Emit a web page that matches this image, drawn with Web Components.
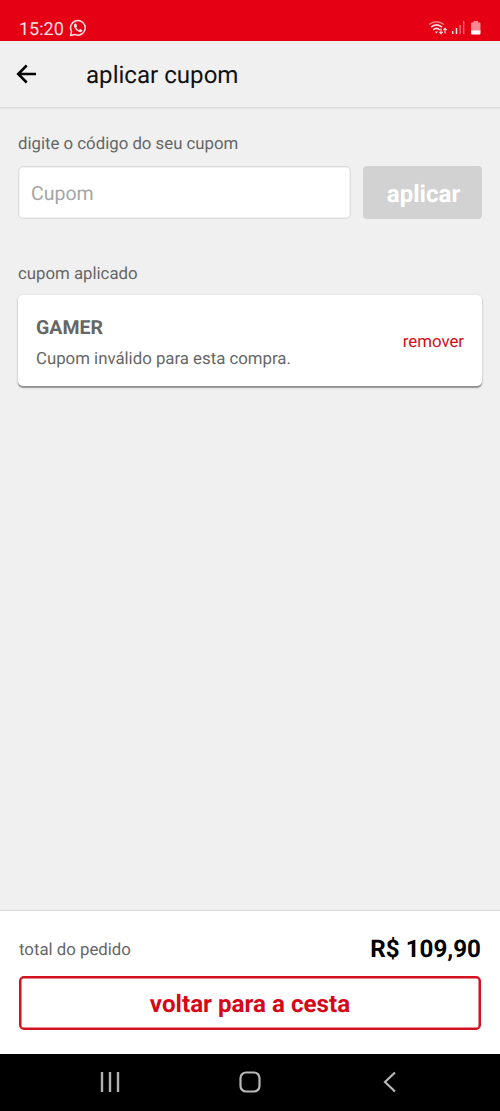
<!DOCTYPE html>
<html lang="pt-BR">
<head>
<meta charset="utf-8">
<title>aplicar cupom</title>
<style>
html,body{margin:0;height:100%}
body{font-family:Roboto,"Liberation Sans",sans-serif;background:#f0f0f0;color:#666;overflow:hidden;text-rendering:geometricPrecision}
</style>
</head>
<body>
<coupon-app></coupon-app>
<script>
const define = (name, html) => customElements.define(name, class extends HTMLElement {
  constructor() {
    super();
    const t = document.createElement('template');
    t.innerHTML = html;
    this.attachShadow({mode: 'open'}).appendChild(t.content.cloneNode(true));
  }
});

define('status-bar', `
<style>
:host{display:flex;align-items:flex-start;justify-content:space-between;box-sizing:border-box;height:41px;padding:18px 18px 0 19px;background:#e60014;color:#ffe3e3}
.left{display:flex;gap:6px;align-items:center;height:22px}
.time{font-size:18px;line-height:22px;padding-top:1px}
svg{display:block}
.wa{margin:0 0 2px -1px}
.sys{margin-top:1px}
</style>
<div class="left"><span class="time">15:20</span>
<svg class="wa" width="18" height="18" viewBox="0 0 18 18" fill="none" stroke="currentColor" stroke-width="1.5"><path d="M1.5 16.4l1-4A7.3 7.3 0 1 1 5.7 15.4z" stroke-linejoin="round"/><path d="M6.1 4.600c-1.500.9-1.500 2.500-.5 4.200 1.200 2.100 2.700 3.500 4.800 4.200 1.700.5 2.900-.3 3.100-1.700l-2.200-1.300-1.200 1.100c-1.400-.6-2.300-1.500-2.900-2.700l.9-1.200-.9-2.600z" fill="currentColor" stroke="none"/></svg></div>
<svg class="sys" width="54" height="20" viewBox="0 0 54 20" fill="none" stroke="currentColor">
<path d="M1 5.500Q8.500-.200 16 5.500" stroke-width="1.500" opacity=".55"/>
<path d="M3 8.200Q8.500 3.500 14 8.200M5.200 10.800Q8.500 8 11.800 10.800" stroke-width="1.700"/>
<path d="M7 12.500h3l-1.500 2z" fill="currentColor" stroke="none"/>
<path d="M13 9.500v5M11.200 12.900l1.800 1.800 1.800-1.800M17 14.500v-5M15.300 11.100L17 9.400l1.700 1.700" stroke-width="1.100"/>
<path d="M24.700 12v3M28.500 9v6" stroke-width="1.500"/><path d="M32.200 6v9M35.700 2v13" stroke-width="1.300" opacity=".5"/>
<path d="M43 4.500q0-1 1-1h1.500V2h4.500v1.500h1.500q1 0 1 1V12H43z" fill="currentColor" stroke="none" opacity=".6"/>
<path d="M43 11.500h9.500v3q0 1-1 1H44q-1 0-1-1z" fill="#fff" stroke="none"/>
</svg>`);

define('app-bar', `
<style>
:host{display:flex;align-items:center;box-sizing:border-box;height:67px;padding:0 16px;border-bottom:1px solid #dcdcdc;background:#f0f0f0;box-shadow:0 1px 1px #e8e8e8;color:#000}
svg{display:block;width:22px;height:22px;margin-right:48px}
h1{margin:2px 0 0;font-weight:400;font-size:24.100px;line-height:30px;color:#111}
</style>
<svg viewBox="0 0 22 22" fill="none" stroke="#000" stroke-width="2.500"><path d="M20 11H2.700M10.700 2.500L2.200 11l8.500 8.500"/></svg>
<h1><slot></slot></h1>`);

define('field-label', `
<style>:host{display:block;font-size:16.800px;line-height:20px;padding-top:1px;color:#666}</style><slot></slot>`);

define('coupon-form', `
<style>
:host{display:flex;gap:12px;height:53px}
input{flex:1;min-width:0;box-sizing:border-box;border:1px solid #dcdcdc;box-shadow:inset 0 0 0 .5px #e4e4e4;border-radius:5px;background:#fff;padding:2px 12px 0;font:400 19.500px Roboto,sans-serif;text-rendering:inherit;color:#666;outline:0}
input::placeholder{color:#a5a5a5;opacity:1}
button{width:119px;border:0;border-radius:4px;background:#d2d2d2;color:#fff;font:700 24.100px Roboto,sans-serif;text-rendering:inherit;padding:2px 0 0 2px}
</style>
<input placeholder="Cupom" aria-label="Cupom"><button disabled>aplicar</button>`);

define('coupon-card', `
<style>
:host{display:flex;align-items:center;justify-content:space-between;box-sizing:border-box;height:91px;padding:3px 18px 0;background:#fff;border-radius:5px;box-shadow:0 1.500px 1px rgba(0,0,0,.32),0 1px 3px rgba(0,0,0,.18)}
.code{font-weight:700;font-size:19.500px;line-height:24px;color:#666}
.msg{font-size:16.800px;line-height:22px;margin-top:8px;margin-bottom:-1px}
.rm{font-size:16.800px;line-height:22px;color:#d40b16;margin-bottom:1px}
</style>
<div><div class="code"><slot name="code"></slot></div><div class="msg"><slot></slot></div></div>
<span class="rm">remover</span>`);

define('order-footer', `
<style>
:host{display:block;box-sizing:border-box;height:144px;border-top:1px solid #d9d9d9;background:#fff;padding:22px 19px 0}
.row{display:flex;align-items:center;justify-content:space-between;height:32px}
.label{font-size:16.800px;padding-top:1px}
.price{font-weight:700;font-size:24.200px;color:#000}
button{display:block;width:100%;height:54px;margin-top:11px;box-sizing:border-box;border:2px solid #d3121f;box-shadow:inset 0 0 0 .5px #d3121f;border-radius:5px;background:#fff;color:#d60717;font:700 24.200px Roboto,sans-serif;text-rendering:inherit;padding:2px 0 0}
</style>
<div class="row"><span class="label">total do pedido</span><span class="price"><slot></slot></span></div>
<button>voltar para a cesta</button>`);

define('nav-bar', `
<style>
:host{display:flex;justify-content:space-around;align-items:center;box-sizing:border-box;height:57px;padding:0 40px 2px;background:#000}
svg{display:block;width:24px;height:24px}
</style>
<svg viewBox="0 0 24 24" stroke="#b0b0b0" stroke-width="2.400"><path d="M4 2v20M12 2v20M20 2v20"/></svg>
<svg viewBox="0 0 24 24" fill="none" stroke="#b8b8b8" stroke-width="2.200"><rect x="2.500" y="2.500" width="19" height="19" rx="5.500"/></svg>
<svg viewBox="0 0 24 24" fill="none" stroke="#b8b8b8" stroke-width="2.200"><path d="M17 2.500L7 12l10 9.500"/></svg>`);

define('coupon-app', `
<style>
:host{display:flex;flex-direction:column;height:1111px;width:500px}
main{flex:1;padding:25px 18px 0}
coupon-form{margin-top:12px}
.applied{margin-top:44px}
coupon-card{margin-top:11px}
</style>
<status-bar></status-bar>
<app-bar>aplicar cupom</app-bar>
<main>
<field-label>digite o código do seu cupom</field-label>
<coupon-form></coupon-form>
<field-label class="applied">cupom aplicado</field-label>
<coupon-card><span slot="code">GAMER</span>Cupom inválido para esta compra.</coupon-card>
</main>
<order-footer>R$ 109,90</order-footer>
<nav-bar></nav-bar>`);
</script>
</body>
</html>
